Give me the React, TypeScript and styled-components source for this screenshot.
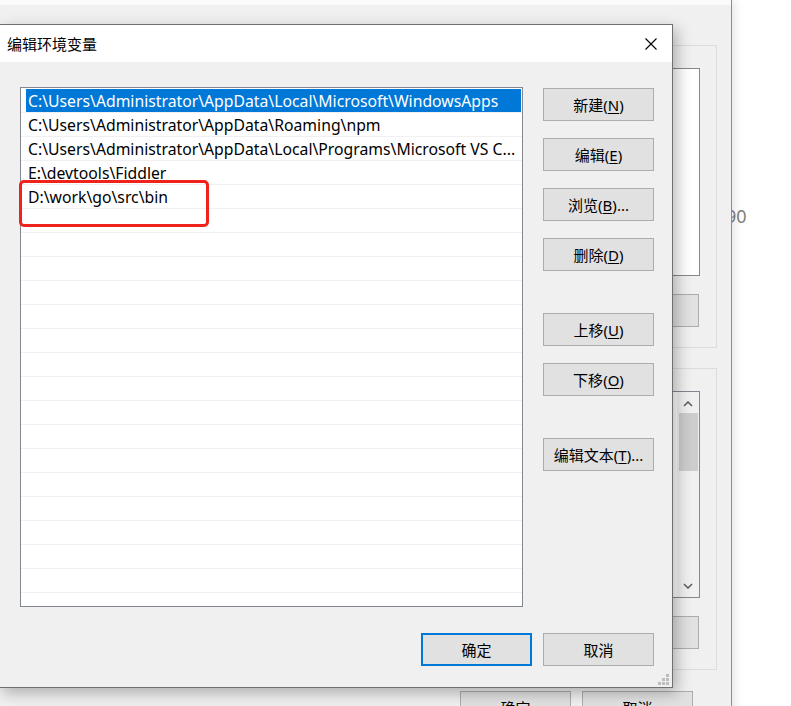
import React from "react"
import styled, { createGlobalStyle } from "styled-components"

const paths = [
    "C:\\Users\\Administrator\\AppData\\Local\\Microsoft\\WindowsApps",
    "C:\\Users\\Administrator\\AppData\\Roaming\\npm",
    "C:\\Users\\Administrator\\AppData\\Local\\Programs\\Microsoft VS C...",
    "E:\\devtools\\Fiddler",
    "D:\\work\\go\\src\\bin",
]

const sideButtons = [
    { label: "新建", key: "N", gap: 0 },
    { label: "编辑", key: "E", gap: 17 },
    { label: "浏览", key: "B", gap: 17, dots: true },
    { label: "删除", key: "D", gap: 17 },
    { label: "上移", key: "U", gap: 42 },
    { label: "下移", key: "O", gap: 17 },
    { label: "编辑文本", key: "T", gap: 42, dots: true },
]

const App = () => {
    const rows: string[] = [...paths, ...new Array(17).fill("")]

    return (
        <Desktop>
            <GlobalStyle />
            <FarText>90</FarText>

            <BackWindow>
                <TopStrip />
                <BackBody>
                    <GroupFrame $height={303}>
                        <BackList $height={208} />
                        <BackButton />
                    </GroupFrame>
                    <GroupFrame $height={302} style={{ marginTop: 20 }}>
                        <BackList $height={207}>
                            <ScrollBar>
                                <svg width="10" height="6" viewBox="0 0 10 6">
                                    <path d="M1 5 L5 1 L9 5" fill="none" stroke="#606060" strokeWidth="1.6" />
                                </svg>
                                <Thumb />
                                <ScrollGap />
                                <svg width="10" height="6" viewBox="0 0 10 6">
                                    <path d="M1 1 L5 5 L9 1" fill="none" stroke="#606060" strokeWidth="1.6" />
                                </svg>
                            </ScrollBar>
                        </BackList>
                        <BackButton />
                    </GroupFrame>
                    <BackFooter>
                        <BackButton as="div">确定</BackButton>
                        <BackButton as="div">取消</BackButton>
                    </BackFooter>
                </BackBody>
            </BackWindow>

            <Dialog>
                <TitleBar>
                    <Title>编辑环境变量</Title>
                    <svg width="12" height="12" viewBox="0 0 12 12">
                        <path d="M0.5 0.5 L11.5 11.5 M11.5 0.5 L0.5 11.5" stroke="#000" strokeWidth="1.1" />
                    </svg>
                </TitleBar>
                <Body>
                    <MainRow>
                        <ListWrap>
                            <ListBox>
                                {rows.map((p, i) => (
                                    <Row key={i}>
                                        <Cell $selected={i === 0}>{p}</Cell>
                                    </Row>
                                ))}
                            </ListBox>
                            <Annotation />
                        </ListWrap>
                        <ButtonCol>
                            {sideButtons.map((b) => (
                                <Button key={b.key} $gap={b.gap}>
                                    {b.label}(<u>{b.key}</u>){b.dots ? "..." : ""}
                                </Button>
                            ))}
                        </ButtonCol>
                    </MainRow>
                    <Footer>
                        <Button $primary>确定</Button>
                        <Button>取消</Button>
                    </Footer>
                </Body>
                <Grip>
                    <svg width="12" height="12" viewBox="0 0 12 12">
                        <g fill="#bdbdbd">
                            <rect x="8" y="0" width="3" height="3" />
                            <rect x="4" y="4" width="3" height="3" />
                            <rect x="8" y="4" width="3" height="3" />
                            <rect x="0" y="8" width="3" height="3" />
                            <rect x="4" y="8" width="3" height="3" />
                            <rect x="8" y="8" width="3" height="3" />
                        </g>
                    </svg>
                </Grip>
            </Dialog>
        </Desktop>
    )
}

const GlobalStyle = createGlobalStyle`
    html, body {
        margin: 0;
        padding: 0;
    }
    body {
        background: #fff;
        font-family: "Noto Sans", "Noto Sans CJK SC", sans-serif;
        overflow: hidden;
    }
`

const Desktop = styled.div`
    position: relative;
    width: 791px;
    height: 706px;
    overflow: hidden;
    background: #fff;
`

const FarText = styled.div`
    position: absolute;
    left: 726px;
    top: 204px;
    font-size: 18px;
    color: #808080;
`

const BackWindow = styled.div`
    position: absolute;
    left: 0;
    top: 0;
    width: 732px;
    height: 760px;
    box-sizing: border-box;
    border-right: 1px solid #8c8c8c;
    background: #f0f0f0;
    box-shadow: 3px 0 10px rgba(0, 0, 0, 0.1);
    display: flex;
    flex-direction: column;
`

const TopStrip = styled.div`
    height: 5px;
    background: #fbfbfb;
`

const BackBody = styled.div`
    display: flex;
    flex-direction: column;
    align-items: flex-end;
    padding: 40px 14px 0 0;
`

const GroupFrame = styled.div<{ $height: number }>`
    width: 520px;
    height: ${(p) => p.$height}px;
    box-sizing: border-box;
    border: 1px solid #dcdcdc;
    padding: 22px 16px 0 0;
    display: flex;
    flex-direction: column;
    align-items: flex-end;
`

const BackList = styled.div<{ $height: number }>`
    width: 400px;
    height: ${(p) => p.$height}px;
    box-sizing: border-box;
    border: 1px solid #828790;
    background: #fff;
    display: flex;
    justify-content: flex-end;
`

const ScrollBar = styled.div`
    width: 22px;
    background: #f0f0f0;
    display: flex;
    flex-direction: column;
    align-items: center;
    padding: 9px 0 8px;
    box-sizing: border-box;

    svg {
        flex: none;
    }
`

const Thumb = styled.div`
    width: 19px;
    height: 58px;
    margin-top: 6px;
    background: #cdcdcd;
`

const ScrollGap = styled.div`
    flex: 1;
`

const BackButton = styled.div`
    width: 111px;
    height: 33px;
    box-sizing: border-box;
    margin: 18px 1px 0 0;
    border: 1px solid #adadad;
    background: #e1e1e1;
    font-family: "Noto Sans CJK SC", sans-serif;
    font-size: 15px;
    color: #000;
    display: flex;
    align-items: center;
    justify-content: center;
`

const BackFooter = styled.div`
    display: flex;
    gap: 10px;
    margin: 3px 23px 0 0;
`

const Dialog = styled.div`
    position: absolute;
    left: -1px;
    top: 24px;
    width: 674px;
    height: 664px;
    box-sizing: border-box;
    border: 1px solid #707070;
    background: #f0f0f0;
    box-shadow: 4px 5px 14px rgba(0, 0, 0, 0.28);
    display: flex;
    flex-direction: column;
`

const TitleBar = styled.div`
    height: 37px;
    flex: none;
    background: #fff;
    display: flex;
    align-items: center;
    justify-content: space-between;
    padding: 0 15px 0 7px;
`

const Title = styled.span`
    font-family: "Noto Sans CJK SC", sans-serif;
    font-size: 15px;
    color: #000;
`

const Body = styled.div`
    display: flex;
    flex-direction: column;
    padding: 25px 18px 0 20px;
`

const MainRow = styled.div`
    display: flex;
    gap: 20px;
`

const ListWrap = styled.div`
    position: relative;
`

const ListBox = styled.div`
    width: 503px;
    height: 520px;
    box-sizing: border-box;
    border: 1px solid #828790;
    background: #fff;
    padding-top: 1px;
    overflow: hidden;
`

const Row = styled.div`
    height: 24px;
    box-sizing: border-box;
    border-bottom: 1px solid #f0f0f0;
`

const Cell = styled.div<{ $selected?: boolean }>`
    height: 23px;
    margin: 0 1px 0 5px;
    padding-left: 2px;
    line-height: 24px;
    font-size: 15.75px;
    white-space: nowrap;
    overflow: hidden;
    background: ${(p) => (p.$selected ? "#0078d7" : "transparent")};
    color: ${(p) => (p.$selected ? "#fff" : "#000")};
`

const Annotation = styled.div`
    position: absolute;
    left: -1px;
    top: 93px;
    width: 190px;
    height: 47px;
    box-sizing: border-box;
    border: 3px solid #f0231c;
    border-radius: 5px;
`

const ButtonCol = styled.div`
    display: flex;
    flex-direction: column;
    padding-top: 1px;
`

const Button = styled.div<{ $gap?: number; $primary?: boolean }>`
    width: 111px;
    height: 33px;
    box-sizing: border-box;
    margin-top: ${(p) => p.$gap || 0}px;
    border: ${(p) => (p.$primary ? "2px solid #0078d7" : "1px solid #adadad")};
    background: #e1e1e1;
    font-size: 15px;
    color: #000;
    display: flex;
    align-items: center;
    justify-content: center;

    u {
        text-underline-offset: 2px;
    }
`

const Footer = styled.div`
    display: flex;
    justify-content: flex-end;
    gap: 11px;
    margin-top: 26px;
`

const Grip = styled.div`
    position: absolute;
    right: 2px;
    bottom: 1px;
    line-height: 0;
`

export default App
